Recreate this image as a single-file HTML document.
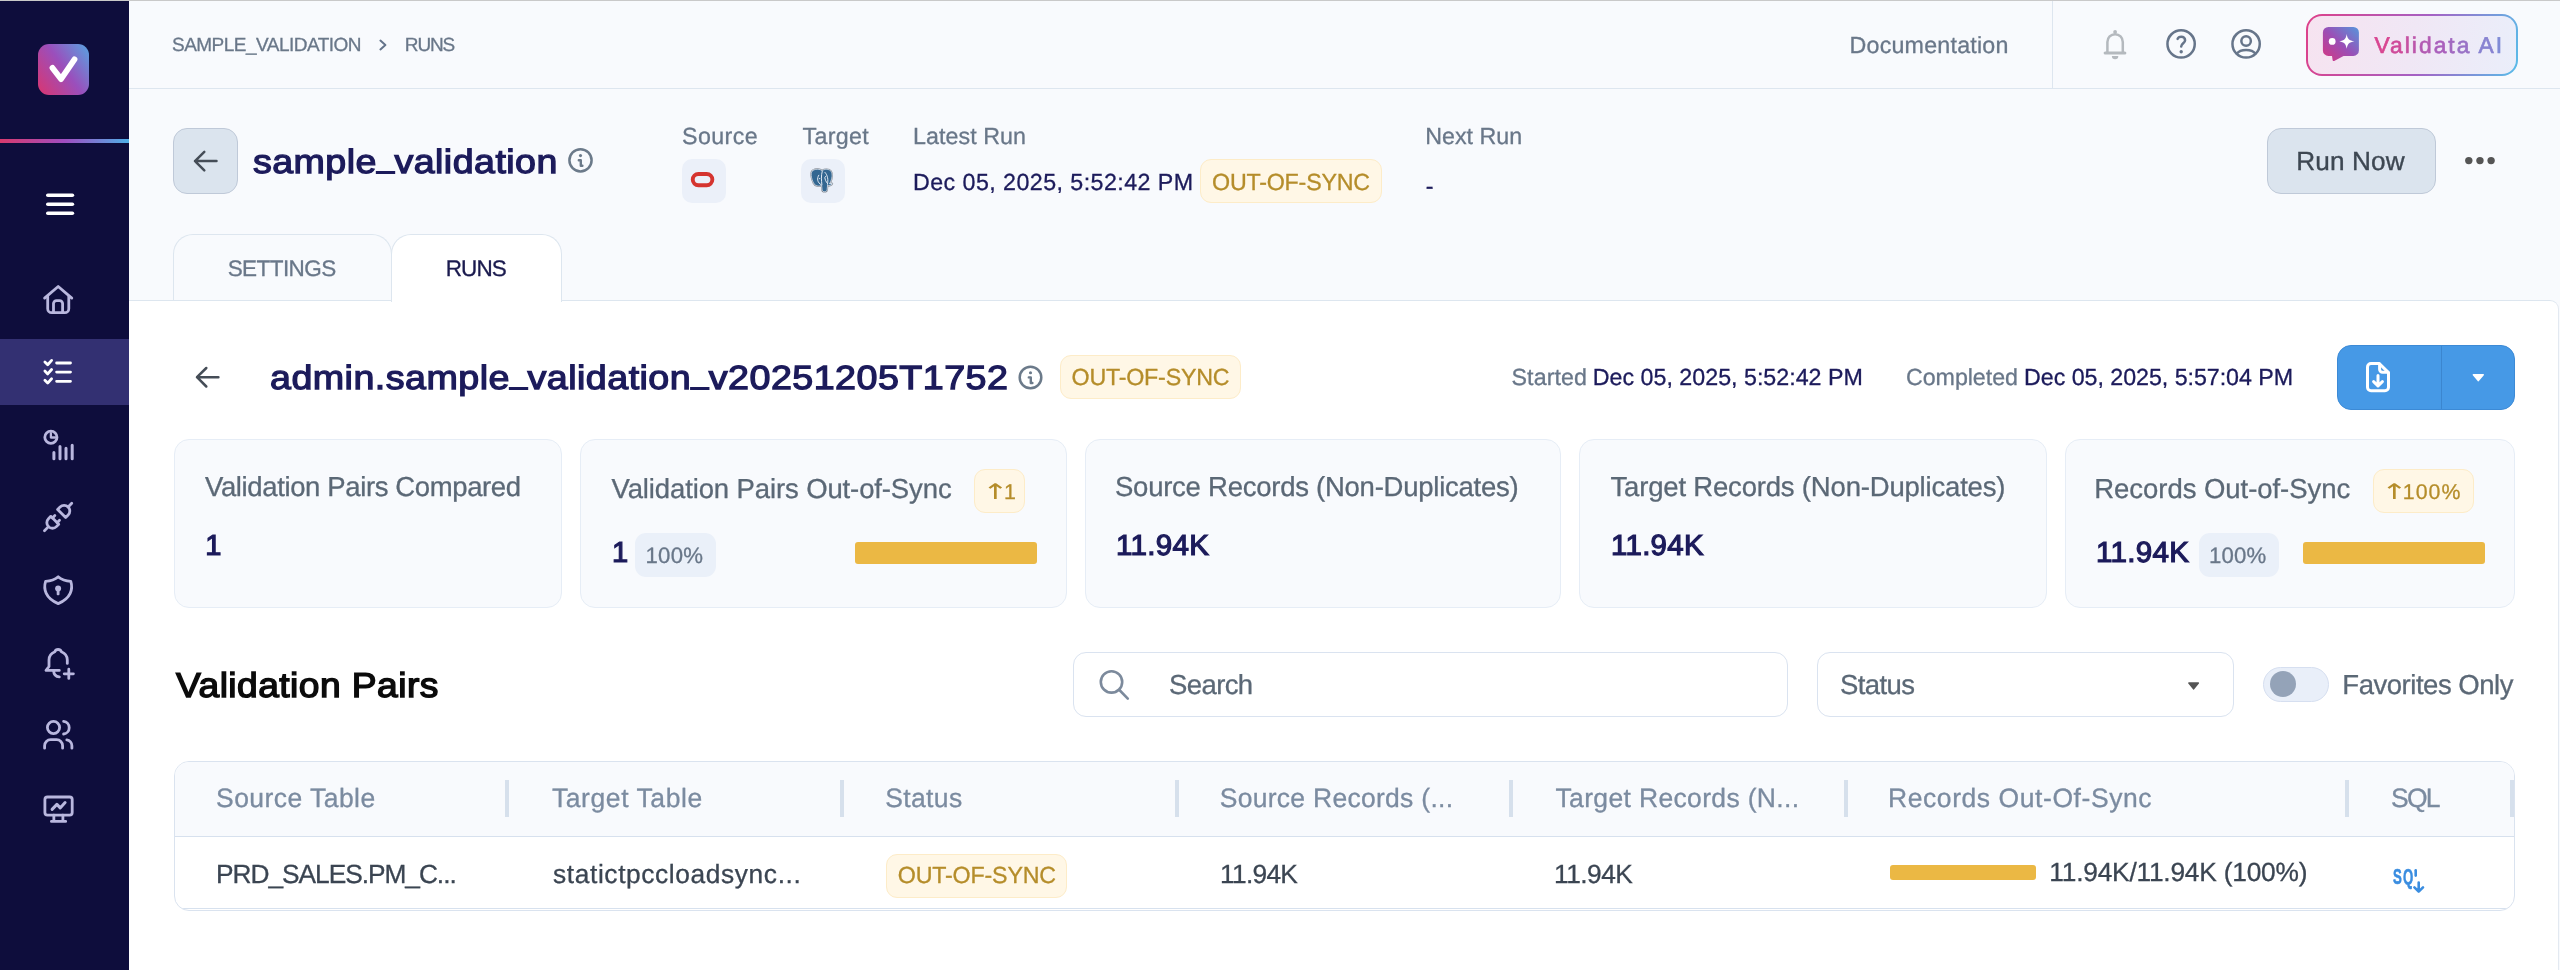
<!DOCTYPE html>
<html lang="en"><head><meta charset="utf-8"><title>Validata - sample_validation runs</title>
<style>
html,body{margin:0;padding:0}
body{width:2560px;height:970px;overflow:hidden;background:#f8fafd;font-family:"Liberation Sans",sans-serif;position:relative}
.a{position:absolute;box-sizing:border-box}
.t{position:absolute;white-space:nowrap;line-height:1;text-rendering:geometricPrecision;-webkit-text-stroke:0.3px}
.grad{background:linear-gradient(90deg,#d6418c 0%,#b457b4 55%,#8d72d4 100%);-webkit-background-clip:text;background-clip:text;color:transparent !important;-webkit-text-fill-color:transparent}
svg{position:absolute;overflow:visible}
.card{position:absolute;box-sizing:border-box;background:#f8fafd;border:1px solid #e6edf6;border-radius:15px}
.badge{position:absolute;box-sizing:border-box;background:#fff7e6;border:1px solid #fdecc8;border-radius:11px}
.pill{position:absolute;box-sizing:border-box;background:#eaf0f9;border-radius:11px}
.bar{position:absolute;background:#ebb844;border-radius:3px}
.sep{position:absolute;width:4px;top:780px;height:37px;background:#d6e0ec}
</style></head><body>
<!-- top hairline -->
<div class="a" style="left:0;top:0;width:2560px;height:1px;background:#c9c9c9"></div>
<!-- sidebar -->
<div class="a" style="left:0;top:1px;width:129px;height:969px;background:#0e0d3c"></div>
<div class="a" style="left:0;top:339px;width:129px;height:66px;background:#333072"></div>
<div class="a" style="left:0;top:139px;width:129px;height:4px;background:linear-gradient(90deg,#d83a6e 0%,#a04dc0 50%,#4fb0e8 100%)"></div>
<div class="a" style="left:38px;top:44px;width:51px;height:51px;border-radius:11px;background:linear-gradient(55deg,#db356f 0%,#9a4fbc 52%,#57a4e2 100%)"></div>
<!-- topbar borders -->
<div class="a" style="left:129px;top:88px;width:2431px;height:1px;background:#dde6ef"></div>
<div class="a" style="left:2052px;top:1px;width:1px;height:87px;background:#dde6ef"></div>
<!-- white content panel -->
<div class="a" style="left:129px;top:300px;width:2430px;height:680px;background:#fff;border-top:1px solid #dde6ef;border-right:1px solid #e3e9f1;border-top-right-radius:9px"></div>
<!-- tabs -->
<div class="a" style="left:173px;top:234px;width:219px;height:66px;background:#f8fafd;border:1px solid #dde6ef;border-bottom:none;border-radius:20px 20px 0 0"></div>
<div class="a" style="left:391px;top:234px;width:171px;height:68px;background:#fff;border:1px solid #dde6ef;border-bottom:none;border-radius:20px 20px 0 0"></div>
<!-- back button -->
<div class="a" style="left:173px;top:128px;width:65px;height:66px;background:#dbe4ee;border:1px solid #bfc9d8;border-radius:14px"></div>
<!-- source/target boxes -->
<div class="a" style="left:682px;top:159px;width:44px;height:44px;background:#ebf0f9;border-radius:10px"></div>
<div class="a" style="left:801px;top:159px;width:44px;height:44px;background:#ebf0f9;border-radius:10px"></div>
<!-- badges -->
<!-- run now -->
<div class="a" style="left:2267px;top:128px;width:169px;height:66px;background:#dbe4ee;border:1px solid #bfc9d8;border-radius:14px"></div>
<!-- validata ai button -->
<div class="a" style="left:2306px;top:14px;width:212px;height:62px;border-radius:16px;background:linear-gradient(105deg,#de4089 0%,#a561c4 55%,#58bde9 100%)"></div>
<div class="a" style="left:2308px;top:16px;width:208px;height:58px;border-radius:14px;background:linear-gradient(100deg,#f6e3f0 0%,#f0e7f5 50%,#eaeefa 100%)"></div>
<!-- blue split button -->
<div class="a" style="left:2337px;top:345px;width:178px;height:65px;background:#4699e6;border:1px solid #3c8ad6;border-radius:14px"></div>
<div class="a" style="left:2441px;top:346px;width:1px;height:63px;background:#3b86cf"></div>
<!-- cards -->
<div class="card" style="left:174px;top:439px;width:388px;height:169px"></div>
<div class="card" style="left:580px;top:439px;width:487px;height:169px"></div>
<div class="card" style="left:1085px;top:439px;width:476px;height:169px"></div>
<div class="card" style="left:1579px;top:439px;width:468px;height:169px"></div>
<div class="card" style="left:2065px;top:439px;width:450px;height:169px"></div>
<div class="pill" style="left:635px;top:533px;width:81px;height:44px"></div>
<div class="pill" style="left:2199px;top:533px;width:80px;height:44px"></div>
<div class="bar" style="left:855px;top:542px;width:182px;height:22px"></div>
<div class="bar" style="left:2303px;top:542px;width:182px;height:22px"></div>
<!-- search / status / toggle -->
<div class="a" style="left:1073px;top:652px;width:715px;height:65px;background:#fff;border:1px solid #dae3f0;border-radius:13px"></div>
<div class="a" style="left:1817px;top:652px;width:417px;height:65px;background:#fff;border:1px solid #dae3f0;border-radius:13px"></div>
<div class="a" style="left:2263px;top:667px;width:66px;height:35px;background:#e9eff9;border:1px solid #d6dff0;border-radius:18px"></div>
<div class="a" style="left:2270px;top:671px;width:26px;height:26px;background:#94a3b8;border-radius:50%"></div>
<!-- table -->
<div class="a" style="left:174px;top:761px;width:2341px;height:150px;background:#fff;border:1px solid #dae3ef;border-radius:15px;overflow:hidden">
  <div class="a" style="left:0;top:0;width:2341px;height:75px;background:#f8fafd;border-bottom:1px solid #d7e1ee"></div>
  <div class="a" style="left:0;top:146px;width:2341px;height:1px;background:#d7e1ee"></div>
</div>
<div class="sep" style="left:505px"></div>
<div class="sep" style="left:840px"></div>
<div class="sep" style="left:1175px"></div>
<div class="sep" style="left:1509px"></div>
<div class="sep" style="left:1844px"></div>
<div class="sep" style="left:2345px"></div>
<div class="sep" style="left:2510px"></div>
<div class="bar" style="left:1890px;top:865px;width:146px;height:15px"></div>
<div class="badge" style="left:1200px;top:159px;width:182px;height:44px"></div>
<div class="badge" style="left:1060px;top:355px;width:181px;height:44px"></div>
<div class="badge" style="left:886px;top:854px;width:181px;height:44px"></div>
<div class="badge" style="left:974px;top:469px;width:51px;height:44px"></div>
<div class="badge" style="left:2373px;top:469px;width:101px;height:44px"></div>
<svg width="2560" height="970" viewBox="0 0 2560 970" style="left:0;top:0;will-change:transform" fill="none" stroke-linecap="round" stroke-linejoin="round">
<defs>
<linearGradient id="gchat" x1="0" y1="1" x2="1" y2="0"><stop offset="0" stop-color="#d8367f"/><stop offset="0.5" stop-color="#9a4fb6"/><stop offset="1" stop-color="#5596dc"/></linearGradient>
</defs>
<!-- logo check -->
<path d="M52.5 67.9 L61 79.1 L74.5 59.3" stroke="#fff" stroke-width="5.8"/>
<!-- hamburger -->
<g stroke="#fff" stroke-width="3.6"><path d="M47.8 195.2H72.4"/><path d="M47.8 204.2H72.4"/><path d="M47.8 213.2H72.4"/></g>
<!-- sidebar icons -->
<g stroke="#b9b7de" stroke-width="2.8">
 <!-- home -->
 <path d="M44.6 298.1 L58.2 286.5 L71.8 298.1"/>
 <path d="M47.7 296.5 V308.7 a4 4 0 0 0 4 4 H64.8 a4 4 0 0 0 4 -4 V296.5"/>
 <path d="M53.5 312.7 V303.6 a3 3 0 0 1 3 -3 H59.6 a3 3 0 0 1 3 3 V312.7"/>
 <!-- chart -->
 <circle cx="50.9" cy="437.3" r="6.1"/>
 <path d="M50.9 433.2 V437.5 H55.2" stroke-width="2.3"/>
 <path d="M53.9 452.5V458.7M60 446.5V458.7M66 448.2V458.7M72.2 445.3V458.7" stroke-width="3"/>
 <!-- plug -->
 <g transform="translate(58.1 517) rotate(-45)">
  <path d="M-19.3 0H-13.6"/><path d="M-4.7 -5.6H-8A5.6 5.6 0 0 0 -8 5.6H-4.7Z"/><path d="M-4.7 -3.3H-1.3M-4.7 3.3H-1.3"/>
  <path d="M5 -5.7H8.5A5.7 5.7 0 0 1 8.5 5.7H5Z"/><path d="M14.2 0H19.3"/>
 </g>
 <!-- shield -->
 <path d="M58.2 576.8 C54.5 579.8 50 581 45.6 581.4 C43.2 589 45.5 598.5 58.2 603.6 C70.9 598.5 73.2 589 70.8 581.4 C66.4 581 61.9 579.8 58.2 576.8 Z"/>
 <!-- bell plus -->
 <path d="M67.3 663.4 V660 C67.3 656 65 653.3 61.4 651.8 C60.8 650.2 59.6 649.5 58.1 649.5 C56.6 649.5 55.4 650.2 54.8 651.8 C51.2 653.3 49 656 49 660 V666.5 L46 670.4 H59.3"/>
 <path d="M53.6 670.6 C53.8 674.5 56 676.6 59.3 676.8"/>
 <path d="M64.2 673.8H73.4M68.8 669.2V678.4"/>
 <!-- users -->
 <circle cx="53.5" cy="727.5" r="6.1"/>
 <path d="M44.6 748.2 V745.7 a6 6 0 0 1 6 -6 H56.6 a6 6 0 0 1 6 6 V748.2"/>
 <path d="M63.6 721.3 A6.4 6.4 0 0 1 63.6 734"/>
 <path d="M66.8 739.9 A6 6 0 0 1 71.9 745.8 V748.2"/>
 <!-- monitor -->
 <rect x="44.9" y="797" width="27.3" height="18.2" rx="2.6"/>
 <path d="M53.85 815.2V821.4M62.9 815.2V821.4M51.4 821.4H65.7"/>
 <path d="M52.1 809.4 L56.9 804.4 L60.2 807.9 L65.1 802.6" stroke-width="3"/>
</g>
<g fill="#b9b7de"><circle cx="58.1" cy="588.6" r="3"/><rect x="56.7" y="588.6" width="2.8" height="6.6" rx="1"/></g>
<!-- checklist (active, white) -->
<g stroke="#fff" stroke-width="2.8">
 <path d="M56.6 363H70.5M56.6 372.1H70.5M56.6 381.3H70.5"/>
 <path d="M44.9 362 L47.7 364.8 L51.6 360.4M44.9 371.1 L47.7 373.9 L51.6 369.5M44.9 380.3 L47.7 383.1 L51.6 378.7"/>
</g>
<!-- breadcrumb chevron -->
<path d="M380.4 40.6 L385.4 45 L380.4 49.4" stroke="#64748b" stroke-width="2"/>
<!-- topbar bell -->
<g stroke="#b4b9be" stroke-width="2.5"><path d="M2107.4 52 V41.9 a7.7 7.7 0 0 1 15.4 0 V52"/><path d="M2105.2 53H2124.8" stroke-width="3.2"/></g>
<g fill="#b4b9be"><circle cx="2115.1" cy="31.9" r="1.9"/><path d="M2111.9 56H2118.3A3.2 3.2 0 0 1 2111.9 56Z"/></g>
<!-- help -->
<g stroke="#66758a" stroke-width="2.5"><circle cx="2181.1" cy="43.9" r="13.65"/><path d="M2177.6 38.9 C2178.2 37.3 2179.6 36.7 2181.3 36.7 C2183.5 36.7 2185.1 38.2 2185.1 40.2 C2185.1 43.2 2181.2 43.4 2181.2 46.6"/></g>
<circle cx="2181.2" cy="51.7" r="1.7" fill="#66758a"/>
<!-- user -->
<g stroke="#66758a" stroke-width="2.5"><circle cx="2246.1" cy="43.9" r="13.65"/><circle cx="2246.1" cy="41.1" r="4.75"/><path d="M2236.8 53.6 C2238.5 51.2 2242 49.9 2246.1 49.9 C2250.2 49.9 2253.7 51.2 2255.4 53.6"/></g>
<!-- chat icon -->
<path d="M2328.4 26.9 H2353.4 a5.5 5.5 0 0 1 5.5 5.5 V50.4 a5.5 5.5 0 0 1 -5.5 5.5 H2343.5 L2334.2 60.9 a1 1 0 0 1 -1.6 -0.8 L2332 55.9 H2328.4 a5.5 5.5 0 0 1 -5.5 -5.5 V32.4 a5.5 5.5 0 0 1 5.5 -5.5 Z" fill="url(#gchat)"/>
<circle cx="2332.2" cy="41.4" r="3.4" fill="#fff"/>
<path d="M2346.7 34 C2347.5 39 2349 40.6 2354.4 41.4 C2349 42.2 2347.5 43.8 2346.7 48.8 C2345.9 43.8 2344.4 42.2 2339.3 41.4 C2344.4 40.6 2345.9 39 2346.7 34 Z" fill="#fff"/>
<!-- back arrows -->
<path d="M216.5 161.1 H195 M204.3 151.9 L195 161.1 L204.3 170.4" stroke="#454d57" stroke-width="2.5"/>
<path d="M218.4 377.2 H197 M206.3 368 L197 377.2 L206.3 386.5" stroke="#454d57" stroke-width="2.5"/>
<!-- info icons -->
<g stroke="#6b7a8a" stroke-width="2.5"><circle cx="580.5" cy="160.3" r="11.1"/><path d="M578.8 160.2 H580.8 V165.8 H582.4" stroke-width="2.4"/>
<circle cx="1030.5" cy="377.5" r="10.8"/><path d="M1028.8 377.4 H1030.8 V383 H1032.4" stroke-width="2.4"/></g>
<g fill="#6b7a8a"><circle cx="580.5" cy="155.6" r="1.55"/><circle cx="1030.5" cy="372.8" r="1.55"/></g>
<!-- oracle -->
<rect x="692.75" y="173.95" width="19.6" height="11.3" rx="5.65" stroke="#d5342f" stroke-width="3.9"/>
<!-- postgres -->
<g transform="translate(810 169)">
 <path id="pgb" d="M3 1.2 C6 -0.4 10 0 12 1.6 C14.5 0 19 -0.4 21 2.2 C23 5.2 22 10 20 14 L22.3 14.6 C21.8 16.5 19 17 17.6 16 L17.1 20.8 C16.6 23.4 12.6 23.4 12.1 20.8 L11.6 16.2 C9 18 5 17 3.5 14 C1 9 0 3 3 1.2 Z" fill="#336791" stroke="#7d838c" stroke-width="1.7"/>
 <path d="M3 1.2 C6 -0.4 10 0 12 1.6 C14.5 0 19 -0.4 21 2.2 C23 5.2 22 10 20 14 L22.3 14.6 C21.8 16.5 19 17 17.6 16 L17.1 20.8 C16.6 23.4 12.6 23.4 12.1 20.8 L11.6 16.2 C9 18 5 17 3.5 14 C1 9 0 3 3 1.2 Z" fill="#336791" stroke="#e9eef5" stroke-width="0.7"/>
 <g stroke="#e3ebf4" stroke-width="1"><path d="M8.8 6.2 C6.6 9.4 7.4 13.8 11 15.6"/><path d="M12.2 2.4 C11 7 11.4 11.4 11.9 15.8"/><path d="M15 3.4 C17.8 6.4 18.4 10.8 17.5 15.2"/><path d="M14.8 8.6 C15.2 10.8 15.8 12.6 17.3 14.2"/><path d="M19.6 14.6 L21.6 15"/></g>
 <circle cx="9.6" cy="9.6" r="0.7" fill="#e3ebf4"/><circle cx="15.6" cy="7.6" r="0.6" fill="#e3ebf4"/>
</g>
<!-- three dots -->
<g fill="#555"><circle cx="2468.8" cy="160.6" r="3.7"/><circle cx="2479.95" cy="160.6" r="3.7"/><circle cx="2491.1" cy="160.6" r="3.7"/></g>
<!-- file download -->
<g stroke="#fff" stroke-width="3"><path d="M2379.3 363.5 H2371 a3.5 3.5 0 0 0 -3.5 3.5 V387.3 a3.5 3.5 0 0 0 3.5 3.5 H2385 a3.5 3.5 0 0 0 3.5 -3.5 V372.6 Z"/><path d="M2379.6 364 V369.2 a3 3 0 0 0 3 3 H2388"/><path d="M2378 375.5 V386 M2373.6 381.6 L2378 386 L2382.4 381.6"/></g>
<!-- carets -->
<path d="M2473.4 374.8 H2483.2 L2478.3 380.6 Z" fill="#fff" stroke="#fff" stroke-width="1.6"/>
<path d="M2188.9 683 H2198.3 L2193.6 688.8 Z" fill="#555" stroke="#555" stroke-width="1.6"/>
<!-- search -->
<g stroke="#7c8a9c" stroke-width="2.6"><circle cx="1111.5" cy="681.9" r="10.7"/><path d="M1119.4 690 L1127.8 698.6"/></g>
<!-- sql icon -->
<g stroke="#3a8de0" stroke-width="2.6"><path d="M2415.7 870.2 V875.6"/><path d="M2418.7 882.6 V891.4 M2414.4 887.3 L2418.7 891.6 L2423 887.3"/></g>
<text transform="translate(2392.9 883.6) scale(0.6 1)" font-family="Liberation Sans, sans-serif" font-weight="700" font-size="22" fill="#3a8de0" stroke="#3a8de0" stroke-width="0.6" letter-spacing="2">SQ</text>
</svg>

<div id="tx" style="position:absolute;left:0;top:0;width:2560px;height:970px;will-change:transform">
<span class="t" style="left:172.00px;top:36px;font-size:19.0px;font-weight:400;color:#697789;letter-spacing:-0.519px;">SAMPLE_VALIDATION</span>
<span class="t" style="left:404.80px;top:36px;font-size:19.0px;font-weight:400;color:#697789;letter-spacing:-1.133px;">RUNS</span>
<span class="t" style="left:1849.50px;top:34px;font-size:23.25px;font-weight:400;color:#697789;letter-spacing:0.208px;">Documentation</span>
<span class="t" style="left:2374.50px;top:34px;font-size:22.8px;font-weight:400;color:#c2409a;letter-spacing:2.02px;"><span style="color:#d84691;-webkit-text-stroke:0.65px #d84691">V</span><span style="color:#cf4b9a;-webkit-text-stroke:0.65px #cf4b9a">a</span><span style="color:#c650a2;-webkit-text-stroke:0.65px #c650a2">l</span><span style="color:#bc56ab;-webkit-text-stroke:0.65px #bc56ab">i</span><span style="color:#b35bb3;-webkit-text-stroke:0.65px #b35bb3">d</span><span style="color:#aa60bc;-webkit-text-stroke:0.65px #aa60bc">a</span><span style="color:#a269c1;-webkit-text-stroke:0.65px #a269c1">t</span><span style="color:#9972c6;-webkit-text-stroke:0.65px #9972c6">a</span><span style="color:#917acc;-webkit-text-stroke:0.65px #917acc"> </span><span style="color:#8883d1;-webkit-text-stroke:0.65px #8883d1">A</span><span style="color:#808cd6;-webkit-text-stroke:0.65px #808cd6">I</span></span>
<span class="t" style="left:253.40px;top:146px;font-size:33.5px;font-weight:400;color:#1c1b5b;letter-spacing:0.4px;transform:scaleX(1.1220);transform-origin:0 0;-webkit-text-stroke:1.25px #1c1b5b;">sample<span style="position:relative;top:-4.6px;font-size:0.82em">_</span>validation</span>
<span class="t" style="left:682.00px;top:125px;font-size:23.25px;font-weight:400;color:#697789;letter-spacing:0.4px;">Source</span>
<span class="t" style="left:802.50px;top:125px;font-size:23.25px;font-weight:400;color:#697789;letter-spacing:0.3px;">Target</span>
<span class="t" style="left:913.00px;top:125px;font-size:23.25px;font-weight:400;color:#697789;letter-spacing:0.056px;">Latest Run</span>
<span class="t" style="left:1425.25px;top:125px;font-size:23.25px;font-weight:400;color:#697789;letter-spacing:0.0px;">Next Run</span>
<span class="t" style="left:913.00px;top:171px;font-size:23.25px;font-weight:400;color:#1c1b5b;letter-spacing:0.435px;">Dec 05, 2025, 5:52:42 PM</span>
<span class="t" style="left:1212.00px;top:171px;font-size:23.25px;font-weight:400;color:#b58d2a;letter-spacing:-0.2px;">OUT-OF-SYNC</span>
<span class="t" style="left:2296.20px;top:148px;font-size:26.2px;font-weight:400;color:#3d4752;letter-spacing:0.133px;-webkit-text-stroke:0.35px #3d4752;">Run Now</span>
<span class="t" style="left:227.70px;top:258px;font-size:22.5px;font-weight:400;color:#697789;letter-spacing:-0.571px;">SETTINGS</span>
<span class="t" style="left:445.80px;top:258px;font-size:22.5px;font-weight:400;color:#1a1a4e;letter-spacing:-0.933px;">RUNS</span>
<span class="t" style="left:270.13px;top:362px;font-size:33.5px;font-weight:400;color:#1c1b5b;letter-spacing:0.4px;transform:scaleX(1.1244);transform-origin:0 0;-webkit-text-stroke:1.25px #1c1b5b;">admin.sample<span style="position:relative;top:-4.6px;font-size:0.82em">_</span>validation<span style="position:relative;top:-4.6px;font-size:0.82em">_</span>v20251205T1752</span>
<span class="t" style="left:1071.50px;top:366px;font-size:23.25px;font-weight:400;color:#b58d2a;letter-spacing:-0.2px;">OUT-OF-SYNC</span>
<span class="t" style="left:1511.50px;top:366px;font-size:23.25px;font-weight:400;color:#697789;letter-spacing:0.083px;">Started</span>
<span class="t" style="left:1592.75px;top:366px;font-size:23.25px;font-weight:400;color:#1c1b5b;letter-spacing:0.0px;">Dec 05, 2025, 5:52:42 PM</span>
<span class="t" style="left:1906.00px;top:366px;font-size:23.25px;font-weight:400;color:#697789;letter-spacing:-0.062px;">Completed</span>
<span class="t" style="left:2024.00px;top:366px;font-size:23.25px;font-weight:400;color:#1c1b5b;letter-spacing:-0.043px;">Dec 05, 2025, 5:57:04 PM</span>
<span class="t" style="left:205.00px;top:473px;font-size:27.5px;font-weight:400;color:#5b6876;letter-spacing:-0.375px;">Validation Pairs Compared</span>
<span class="t" style="left:205.25px;top:532px;font-size:29.1px;font-weight:400;color:#1c1b5b;letter-spacing:0px;-webkit-text-stroke:1.2px #1c1b5b;">1</span>
<span class="t" style="left:611.50px;top:475px;font-size:27.5px;font-weight:400;color:#5b6876;letter-spacing:-0.12px;">Validation Pairs Out-of-Sync</span>
<span class="t" style="left:1004.00px;top:482px;font-size:21.3px;font-weight:400;color:#b58d2a;letter-spacing:0px;">1</span>
<span class="t" style="left:612.00px;top:539px;font-size:29.1px;font-weight:400;color:#1c1b5b;letter-spacing:0px;-webkit-text-stroke:1.2px #1c1b5b;">1</span>
<span class="t" style="left:645.50px;top:545px;font-size:22.2px;font-weight:400;color:#697789;letter-spacing:0.25px;">100%</span>
<span class="t" style="left:1115.00px;top:473px;font-size:27.5px;font-weight:400;color:#5b6876;letter-spacing:-0.25px;">Source Records (Non-Duplicates)</span>
<span class="t" style="left:1116.48px;top:532px;font-size:29.1px;font-weight:400;color:#1c1b5b;letter-spacing:0.3px;transform:scaleX(1.0164);transform-origin:0 0;-webkit-text-stroke:1.2px #1c1b5b;">11.94K</span>
<span class="t" style="left:1610.50px;top:473px;font-size:27.5px;font-weight:400;color:#5b6876;letter-spacing:-0.183px;">Target Records (Non-Duplicates)</span>
<span class="t" style="left:1610.99px;top:532px;font-size:29.1px;font-weight:400;color:#1c1b5b;letter-spacing:0.3px;transform:scaleX(1.0109);transform-origin:0 0;-webkit-text-stroke:1.2px #1c1b5b;">11.94K</span>
<span class="t" style="left:2094.25px;top:475px;font-size:27.5px;font-weight:400;color:#5b6876;letter-spacing:-0.042px;">Records Out-of-Sync</span>
<span class="t" style="left:2402.75px;top:482px;font-size:21.3px;font-weight:400;color:#b58d2a;letter-spacing:1.083px;">100%</span>
<span class="t" style="left:2096.48px;top:539px;font-size:29.1px;font-weight:400;color:#1c1b5b;letter-spacing:0.3px;transform:scaleX(1.0164);transform-origin:0 0;-webkit-text-stroke:1.2px #1c1b5b;">11.94K</span>
<span class="t" style="left:2209.00px;top:545px;font-size:22.2px;font-weight:400;color:#697789;letter-spacing:0.167px;">100%</span>
<span class="t" style="left:175.58px;top:669px;font-size:34.6px;font-weight:400;color:#0b0b0b;letter-spacing:0.4px;transform:scaleX(1.0765);transform-origin:0 0;-webkit-text-stroke:1.4px #0b0b0b;">Validation Pairs</span>
<span class="t" style="left:1169.00px;top:671px;font-size:27.5px;font-weight:400;color:#5b6876;letter-spacing:-0.6px;">Search</span>
<span class="t" style="left:1840.00px;top:671px;font-size:27.5px;font-weight:400;color:#5b6876;letter-spacing:-0.6px;">Status</span>
<span class="t" style="left:2342.30px;top:671px;font-size:27.5px;font-weight:400;color:#5b6876;letter-spacing:-0.469px;">Favorites Only</span>
<span class="t" style="left:216.00px;top:785px;font-size:26.5px;font-weight:400;color:#7b8ba0;letter-spacing:0.455px;-webkit-text-stroke:0.3px #7b8ba0;">Source Table</span>
<span class="t" style="left:552.00px;top:785px;font-size:26.5px;font-weight:400;color:#7b8ba0;letter-spacing:0.568px;-webkit-text-stroke:0.3px #7b8ba0;">Target Table</span>
<span class="t" style="left:885.25px;top:785px;font-size:26.5px;font-weight:400;color:#7b8ba0;letter-spacing:0.35px;-webkit-text-stroke:0.3px #7b8ba0;">Status</span>
<span class="t" style="left:1219.75px;top:785px;font-size:26.5px;font-weight:400;color:#7b8ba0;letter-spacing:0.278px;-webkit-text-stroke:0.3px #7b8ba0;">Source Records (...</span>
<span class="t" style="left:1555.50px;top:785px;font-size:26.5px;font-weight:400;color:#7b8ba0;letter-spacing:0.342px;-webkit-text-stroke:0.3px #7b8ba0;">Target Records (N...</span>
<span class="t" style="left:1888.00px;top:785px;font-size:26.5px;font-weight:400;color:#7b8ba0;letter-spacing:0.569px;-webkit-text-stroke:0.3px #7b8ba0;">Records Out-Of-Sync</span>
<span class="t" style="left:2391.00px;top:785px;font-size:26.5px;font-weight:400;color:#7b8ba0;letter-spacing:-1.75px;-webkit-text-stroke:0.3px #7b8ba0;">SQL</span>
<span class="t" style="left:216.00px;top:861px;font-size:26.3px;font-weight:400;color:#3b4552;letter-spacing:-1.031px;">PRD_SALES.PM_C...</span>
<span class="t" style="left:553.00px;top:861px;font-size:26.3px;font-weight:400;color:#3b4552;letter-spacing:0.625px;">statictpccloadsync...</span>
<span class="t" style="left:897.75px;top:864px;font-size:23.25px;font-weight:400;color:#b58d2a;letter-spacing:-0.175px;-webkit-text-stroke:0.3px #b58d2a;">OUT-OF-SYNC</span>
<span class="t" style="left:1220.00px;top:861px;font-size:26.3px;font-weight:400;color:#3b4552;letter-spacing:-0.7px;">11.94K</span>
<span class="t" style="left:1554.00px;top:861px;font-size:26.3px;font-weight:400;color:#3b4552;letter-spacing:-0.5px;">11.94K</span>
<span class="t" style="left:2049.25px;top:859px;font-size:26.3px;font-weight:400;color:#3b4552;letter-spacing:-0.211px;">11.94K/11.94K (100%)</span>
<span class="t" style="left:981.68px;top:482px;font-size:21.5px;font-weight:400;color:#b58d2a;letter-spacing:0px;transform:scaleX(1.4800);transform-origin:0 0;font-family:DejaVu Sans,sans-serif;-webkit-text-stroke:0;">↑</span>
<span class="t" style="left:2380.58px;top:482px;font-size:21.5px;font-weight:400;color:#b58d2a;letter-spacing:0px;transform:scaleX(1.4800);transform-origin:0 0;font-family:DejaVu Sans,sans-serif;-webkit-text-stroke:0;">↑</span>
<span class="t" style="left:1425.75px;top:175px;font-size:23.25px;font-weight:400;color:#1c1b5b;letter-spacing:0px;">-</span>
</div>
</body></html>
